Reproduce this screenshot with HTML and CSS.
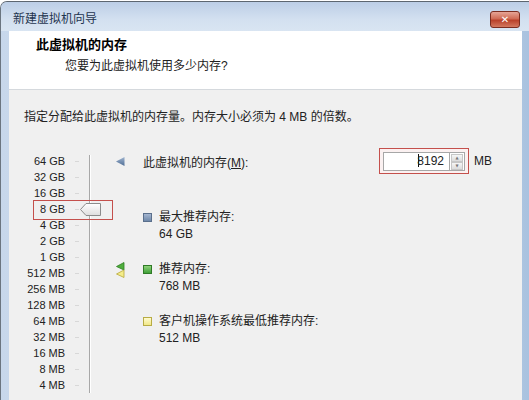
FILE: index.html
```html
<!DOCTYPE html>
<html lang="zh-CN">
<head>
<meta charset="utf-8">
<title>新建虚拟机向导</title>
<link rel="stylesheet" href="styles.css">
</head>
<body>
<div class="window">
  <div class="titlebar">
    <span class="title">新建虚拟机向导</span>
    <span class="close">✕</span>
  </div>
  <div class="client">
    <div class="header">
      <div class="h-title">此虚拟机的内存</div>
      <div class="h-sub">您要为此虚拟机使用多少内存?</div>
    </div>
    <div class="content">
      <div class="intro">指定分配给此虚拟机的内存量。内存大小必须为 4 MB 的倍数。</div>
      <div class="mem">
        <div class="scale">
          <div class="labels">
            <div>64 GB</div><div>32 GB</div><div>16 GB</div><div>8 GB</div><div>4 GB</div>
            <div>2 GB</div><div>1 GB</div><div>512 MB</div><div>256 MB</div><div>128 MB</div>
            <div>64 MB</div><div>32 MB</div><div>16 MB</div><div>8 MB</div><div>4 MB</div>
          </div>
          <div class="ticks">
            <i></i><i></i><i></i><i></i><i></i><i></i><i></i><i></i><i></i><i></i><i></i><i></i><i></i><i></i><i></i>
          </div>
          <div class="track"></div>
          <svg class="thumb" width="21" height="13" viewBox="0 0 21 13">
            <defs>
              <linearGradient id="tg" x1="0" y1="0" x2="0" y2="1">
                <stop offset="0" stop-color="#ffffff"/>
                <stop offset="1" stop-color="#dedede"/>
              </linearGradient>
            </defs>
            <polygon points="0.5,6.5 6,0.5 20.5,0.5 20.5,12.5 6,12.5" fill="url(#tg)" stroke="#8c8c8c"/>
          </svg>
          <div class="mark-box"></div>
        </div>
        <div class="markers">
          <svg class="tri" width="9" height="9" viewBox="0 0 9 9">
            <defs>
              <linearGradient id="bg1" x1="0" y1="0" x2="0" y2="1">
                <stop offset="0" stop-color="#9fb4cf"/>
                <stop offset="1" stop-color="#4f6d95"/>
              </linearGradient>
            </defs>
            <polygon points="0,4.5 8.5,0 8.5,9" fill="url(#bg1)"/>
          </svg>
          <svg class="flag" width="9" height="16" viewBox="0 0 9 16">
            <polygon points="0.5,4.5 8,0.5 8,8" fill="#4fae3d" stroke="#2f7d22" stroke-width="0.8"/>
            <polygon points="0.5,12 8,8 8,15.5" fill="#f4ec8a" stroke="#b7a83a" stroke-width="0.8"/>
          </svg>
        </div>
        <div class="right">
          <div class="row-mem">
            <span class="mem-label">此虚拟机的内存(<u>M</u>):</span>
            <span class="spin-wrap">
              <span class="field"><span class="caret"></span>8192</span>
              <span class="spinner"><span class="up">▲</span><span class="down">▼</span></span>
            </span>
            <span class="unit">MB</span>
          </div>
          <div class="legend">
            <div class="item"><span class="sq sq-blue"></span><div><div>最大推荐内存:</div><div>64 GB</div></div></div>
            <div class="item"><span class="sq sq-green"></span><div><div>推荐内存:</div><div>768 MB</div></div></div>
            <div class="item"><span class="sq sq-yellow"></span><div><div>客户机操作系统最低推荐内存:</div><div>512 MB</div></div></div>
          </div>
        </div>
      </div>
    </div>
  </div>
</div>
</body>
</html>
```

FILE: styles.css
```css
* { box-sizing: border-box; }
html, body { margin: 0; padding: 0; }
body {
  width: 529px;
  height: 400px;
  overflow: hidden;
  background: #ffffff;
  font-family: "Liberation Sans", "Noto Sans CJK SC", sans-serif;
  font-size: 12px;
  color: #1b1b1b;
}
.window {
  width: 529px;
  height: 400px;
  margin-top: 1px;
  border-top: 1px solid #5d6670;
  border-left: 1px solid #6b7580;
  border-top-left-radius: 7px;
  background: linear-gradient(90deg, #c7d7eb 0, #d6e2f1 40%, #c9d9ec 85%, #a9c2df 100%);
  display: flex;
  flex-direction: column;
  overflow: hidden;
}
.titlebar {
  height: 29px;
  flex: none;
  display: flex;
  align-items: center;
  justify-content: space-between;
  padding: 0 9px 0 12px;
  background: linear-gradient(180deg, #bccee6 0, #d3e0f0 60%, #d9e5f2 100%);
}
.title {
  color: #1f344f;
  font-size: 12px;
  margin-top: 2px;
}
.close {
  width: 30px;
  height: 17px;
  margin-top: 5px;
  border: 1px solid #7b2d20;
  border-radius: 3px;
  background: linear-gradient(180deg, #e6a596 0, #d06b55 45%, #b9412a 55%, #d3785f 100%);
  color: #ffffff;
  font-family: "DejaVu Sans", sans-serif;
  font-weight: bold;
  font-size: 10px;
  line-height: 15px;
  text-align: center;
}
.client {
  flex: 1;
  margin: 0 7px 0 8px;
  background: #f0f0f0;
  display: flex;
  flex-direction: column;
}
.header {
  height: 59px;
  flex: none;
  background: #ffffff;
  border-bottom: 1px solid #d5d9dd;
  padding: 6px 0 0 27px;
}
.h-title {
  font-weight: bold;
  font-size: 13px;
  line-height: 16px;
  color: #000;
}
.h-sub {
  margin-top: 5px;
  padding-left: 29px;
  font-size: 12px;
  line-height: 16px;
  color: #222;
}
.content {
  padding: 19px 0 0 15px;
}
.intro {
  line-height: 16px;
  color: #222;
}
.mem {
  margin-top: 23px;
  display: flex;
  align-items: flex-start;
}
.scale {
  position: relative;
  width: 66px;
  display: flex;
  padding-top: 5px;
}
.labels {
  width: 42px;
  font-size: 11px;
  text-align: right;
  color: #222;
}
.labels div {
  height: 16px;
  line-height: 16px;
}
.ticks {
  margin-left: 10px;
  width: 4px;
}
.ticks i {
  display: block;
  height: 16px;
  background: linear-gradient(#d8d8d8, #d8d8d8) no-repeat 0 8px / 4px 1px;
}
.track {
  margin-left: 10px;
  margin-top: 2px;
  width: 1px;
  height: 238px;
  background: #a8a8a8;
  box-shadow: 1px 0 0 #ffffff;
}
.thumb {
  position: absolute;
  left: 56px;
  top: 55px;
}
.mark-box {
  position: absolute;
  left: 9px;
  top: 52px;
  width: 80px;
  height: 20px;
  border: 1.5px solid #c4504c;
}
.markers {
  margin-left: 26px;
  width: 10px;
  display: flex;
  flex-direction: column;
}
.tri {
  display: block;
  margin-top: 9px;
}
.flag {
  display: block;
  margin-top: 96px;
}
.right {
  margin-left: 17px;
  flex: 1;
}
.row-mem {
  height: 26px;
  display: flex;
  align-items: center;
}
.mem-label {
  width: 236px;
  color: #222;
}
.spin-wrap {
  display: flex;
  height: 26px;
  padding: 3px 3px 3px 3px;
  border: 1.5px solid #c4504c;
  background: #fbf1f1;
}
.field {
  width: 66px;
  height: 19px;
  border: 1px solid #a7a7a7;
  border-right: none;
  background: #fff;
  text-align: right;
  padding-right: 5px;
  line-height: 17px;
  font-size: 12px;
  color: #222;
  position: relative;
}
.caret {
  display: inline-block;
  width: 1px;
  height: 13px;
  background: #111;
  vertical-align: -2px;
  margin-right: -2px;
}
.spinner {
  width: 16px;
  height: 19px;
  border: 1px solid #a7a7a7;
  background: #fff;
  display: flex;
  flex-direction: column;
  padding: 1px;
}
.spinner span {
  flex: 1;
  background: linear-gradient(#f6f6f6, #dcdcdc);
  border: 1px solid #c7c7c7;
  color: #777;
  font-size: 4px;
  line-height: 6px;
  text-align: center;
  font-family: "DejaVu Sans", sans-serif;
}
.unit {
  margin-left: 5px;
  color: #222;
}
.legend {
  margin-top: 35px;
}
.item {
  display: flex;
  align-items: flex-start;
  margin-bottom: 18px;
  line-height: 17px;
  color: #222;
}
.sq {
  width: 9px;
  height: 9px;
  margin-top: 4px;
  margin-right: 7px;
  flex: none;
  border: 1px solid;
}
.sq-blue { background: linear-gradient(#a4b6d0, #6f88aa); border-color: #5a6f8c; }
.sq-green { background: linear-gradient(#8fd17a, #3fa038); border-color: #2f7a26; }
.sq-yellow { background: linear-gradient(#fffbd0, #f1e888); border-color: #b8ac45; }
```
